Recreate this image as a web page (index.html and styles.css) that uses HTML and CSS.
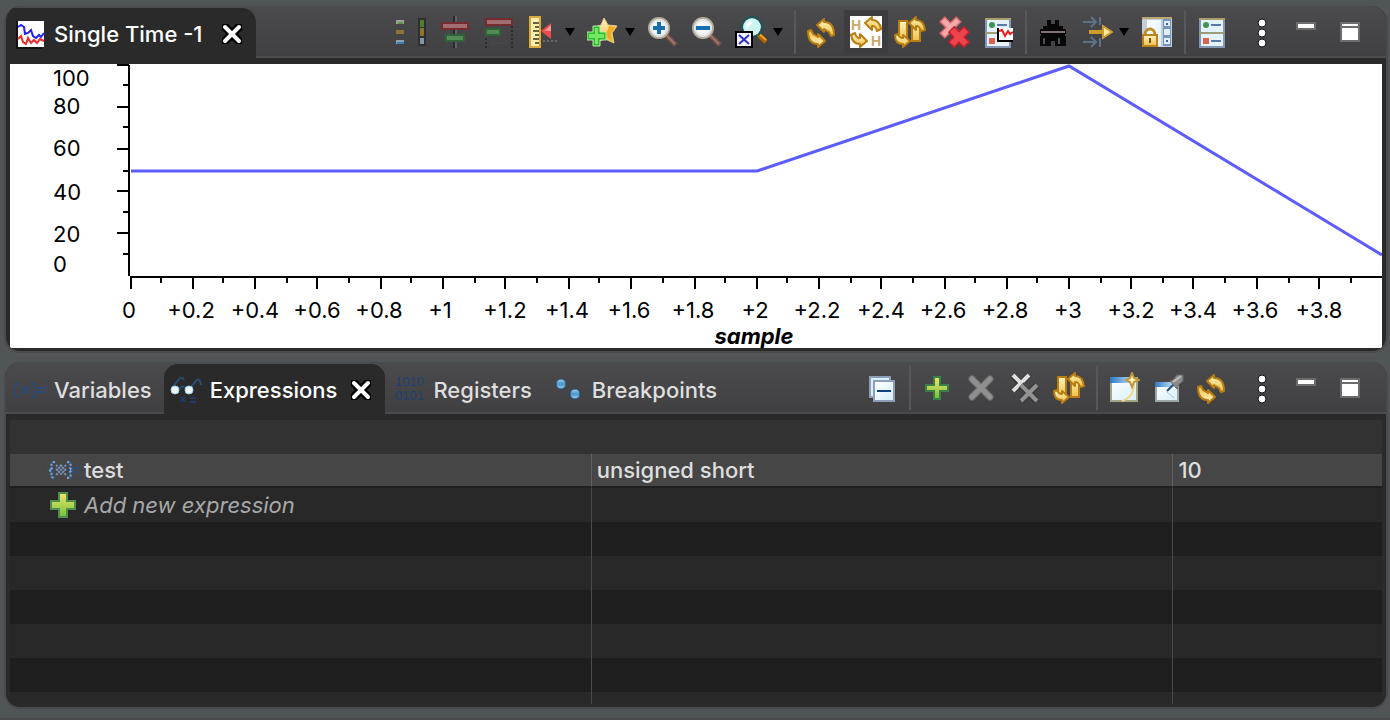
FILE: index.html
```html
<!DOCTYPE html>
<html lang="en">
<head>
	<meta charset="UTF-8">
	<meta name="viewport" content="width=device-width, initial-scale=1.0">
	<title>Debug - Expressions</title>
	<link rel="stylesheet" href="styles.css">
</head>
<body>
	<!-- shared icon shapes -->
	<svg class="defs" aria-hidden="true">
		<defs>
			<linearGradient id="gold" x1="0" y1="0" x2="0" y2="1">
				<stop offset="0" stop-color="#fff3c0"/><stop offset="1" stop-color="#eec04a"/>
			</linearGradient>
			<linearGradient id="lime" x1="0" y1="0" x2="0" y2="1">
				<stop offset="0" stop-color="#f2e56a"/><stop offset="1" stop-color="#6fc13a"/>
			</linearGradient>
			<linearGradient id="sky" x1="0" y1="0" x2="1" y2="1">
				<stop offset="0" stop-color="#ffffff"/><stop offset="1" stop-color="#d6effc"/>
			</linearGradient>
			<linearGradient id="blue" x1="0" y1="0" x2="1" y2="0">
				<stop offset="0" stop-color="#2f78c4"/><stop offset="1" stop-color="#c4e4f8"/>
			</linearGradient>
			<linearGradient id="ball" x1="0" y1="0" x2="0" y2="1">
				<stop offset="0" stop-color="#a8d6ea"/><stop offset=".5" stop-color="#4a94c4"/><stop offset="1" stop-color="#9ad2ee"/>
			</linearGradient>
			<path id="arrow" d="M11 9L18 3V6C24 6 28 10 28 19L25 20L23 16L18 13V16Z" fill="url(#gold)" stroke="#b97d12" stroke-width="2" stroke-linejoin="round"/>
			<g id="refresh">
				<use href="#arrow"/>
				<use href="#arrow" transform="rotate(180 15 17)"/>
			</g>
			<g id="sync">
				<path d="M5 5H13V24H5ZM18 10H26V25H18Z" fill="url(#gold)" stroke="#b97d12" stroke-width="2"/>
				<path d="M15 7L22 1V4C27 4 30 7 31 14L27 15C26 11 25 10 22 10V14Z" fill="url(#gold)" stroke="#b97d12" stroke-width="2" stroke-linejoin="round"/>
				<path d="M16 25L9 31V28C4 28 1 25 1 19L4 18C5 21 6 22 9 22V19Z" fill="url(#gold)" stroke="#b97d12" stroke-width="2" stroke-linejoin="round"/>
			</g>
			<g id="lens">
				<path d="M19 19L29 29" stroke="#75504a" stroke-width="5"/>
				<path d="M20 20L28 28" stroke="#a0776e" stroke-width="2"/>
				<circle cx="12" cy="12" r="10" fill="#f6f6f8" stroke="#b5ad94" stroke-width="2"/>
				<circle cx="12" cy="12" r="8" fill="none" stroke="#dde3ee" stroke-width="2"/>
			</g>
			<g id="close">
				<path d="M6 6H12L16 10L20 6H26V12L22 16L26 20V26H20L16 22L12 26H6V20L10 16L6 12Z" fill="#000"/>
				<path d="M9 9L23 23M23 9L9 23" stroke="#fff" stroke-width="4" stroke-linecap="round"/>
				<path d="M13 13H19V19H13Z" fill="#fff"/>
			</g>
			<g id="cards">
				<path d="M4 3H28V31H4Z" fill="#e3f2fb" stroke="#8496b4" stroke-width="2"/>
				<path d="M3 3H29" stroke="#a89f6a" stroke-width="2"/>
				<path d="M3 17H29" stroke="#9b9c78" stroke-width="2"/>
				<circle cx="10" cy="9" r="3" fill="#3f9450"/>
				<path d="M15 9H25M15 25H25" stroke="#587aa6" stroke-width="2"/>
				<path d="M7 22H13V28H7Z" fill="#e0604e"/>
			</g>
			<g id="dots" fill="#fff" stroke="#111" stroke-width="1">
				<circle cx="16" cy="7" r="4"/><circle cx="16" cy="17" r="4"/><circle cx="16" cy="27" r="4"/>
			</g>
			<g id="minimize">
				<path d="M6 6H26V14H6Z" fill="#6c6c6d"/><path d="M8 8H24V12H8Z" fill="#fff"/>
			</g>
			<g id="maximize">
				<path d="M6 6H26V26H6Z" fill="#6c6c6d"/><path d="M8 8H24V10H8ZM8 12H24V24H8Z" fill="#fff"/>
			</g>
			<path id="plus" d="M13 5H19V13H27V19H19V27H13V19H5V13H13Z" fill="url(#lime)" stroke="#3c7d4c" stroke-width="2"/>
		</defs>
	</svg>

	<section class="panel">
		<header class="panel-head">
			<nav class="tabs">
				<div class="tab active tab-first">
					<svg class="icon" viewBox="0 0 32 32"><path d="M2 3H28V31H2Z" fill="#111"/><path d="M4 3H30V29H4Z" fill="#fff"/><path d="M4 9L7 7L10 9L11 16L14 15L17 12L19 18L22 20L25 17L27 19L30 15" fill="none" stroke="#2222f0" stroke-width="2"/><path d="M4 21L7 18L9 24L12 26L14 20L17 25L20 22L23 25L26 21L30 23" fill="none" stroke="#f02828" stroke-width="2"/></svg>
					<span class="tab-text">Single Time -1</span>
					<button class="close" aria-label="Close Single Time -1"><svg class="icon" viewBox="0 0 32 32"><use href="#close"/></svg></button>
				</div>
			</nav>
			<div class="toolbar">
				<button class="tool" aria-label="Legend" disabled><svg class="icon" viewBox="0 0 32 32"><path d="M1 4H9V8H1Z" fill="#9da39a"/><path d="M3 6H8V8H3Z" fill="#5b9a3c"/><path d="M1 14H9V18H1Z" fill="#8b7438"/><path d="M1 24H9V28H1Z" fill="#8ea0ac"/><path d="M2 26H9V28H2Z" fill="#3e7eae"/><path d="M23 2H31V30H23Z" fill="#2d2f33"/><path d="M25 4H29V11H25Z" fill="#527e2c"/><path d="M25 12H29V20H25Z" fill="#8b742c"/><path d="M25 22H29V28H25Z" fill="#8295a2"/></svg></button>
				<button class="tool" aria-label="Align center" disabled><svg class="icon" viewBox="0 0 32 32"><path d="M14 0H16V32H14Z" fill="#2b2c2e"/><path d="M16 0H18V32H16Z" fill="#5c6067"/><path d="M3 7H29V13H3Z" fill="#a06d70" stroke="#742c30" stroke-width="2"/><path d="M7 19H25V25H7Z" fill="#538b57" stroke="#2f6236" stroke-width="2"/></svg></button>
				<button class="tool" aria-label="Align left" disabled><svg class="icon" viewBox="0 0 32 32"><path d="M3 3H29V9H3Z" fill="#a06d70" stroke="#742c30" stroke-width="2"/><path d="M3 13H17V19H3Z" fill="#538b57" stroke="#2f6236" stroke-width="2"/><path d="M3 22V32M29 10V32" stroke="#2b2c2e" stroke-width="2" stroke-dasharray="2 2"/><path d="M9 24V30M23 24V30M10 27H22" stroke="#494d55" stroke-width="1"/></svg></button>
				<button class="tool drop" aria-label="Measurement"><svg class="icon" viewBox="0 0 32 32"><path d="M3 1H13V31H3Z" fill="#fff0ac" stroke="#dda83c" stroke-width="2"/><path d="M6 7H12M8 11H12M6 15H12M8 19H12M6 23H12M8 27H12" stroke="#6b6048" stroke-width="2"/><path d="M14 15L24 7V23Z" fill="#f04a4c"/><path d="M17 15L24 9V15Z" fill="#ff9292"/><path d="M16 25H30" stroke="#68696c" stroke-width="2" stroke-dasharray="2 2"/></svg><i class="caret"></i></button>
				<button class="tool drop" aria-label="Add marker"><svg class="icon" viewBox="0 0 32 32"><path d="M17 2L21 9L30 10L25 17L27 27L18 23L10 26L11 18L8 11L14 9Z" fill="url(#gold)" stroke="#e5c680" stroke-width="1"/><path d="M22 10L29 11L24 17L25 25L18 20Z" fill="#f2ab20"/><path d="M6 10H13V16H19V24H13V30H6V24H0V16H6Z" fill="#2fbf2a" stroke="#b8eaae" stroke-width="1"/><path d="M8 12H11V18H17V22H11V28H8V22H2V18H8Z" fill="#75e765"/></svg><i class="caret"></i></button>
				<button class="tool" aria-label="Zoom in"><svg class="icon" viewBox="0 0 32 32"><use href="#lens"/><path d="M12 6V18M6 12H18" stroke="#176eae" stroke-width="4"/></svg></button>
				<button class="tool" aria-label="Zoom out"><svg class="icon" viewBox="0 0 32 32"><use href="#lens"/><path d="M5 12H19" stroke="#176eae" stroke-width="4"/></svg></button>
				<button class="tool drop" aria-label="Reset zoom"><svg class="icon" viewBox="0 0 32 32"><path d="M23 18L31 26" stroke="#ac6506" stroke-width="5"/><path d="M23 17L31 24" stroke="#f3a51d" stroke-width="2"/><circle cx="17" cy="11" r="9" fill="#caf5f2"/><circle cx="17" cy="11" r="10" fill="none" stroke="#14565a" stroke-width="2" stroke-dasharray="4 1"/><path d="M11 8Q15 3 18 6L12 13Z" fill="#fff"/><path d="M1 16H17V31H1Z" fill="#f3f3ff" stroke="#000" stroke-width="2"/><path d="M4 19L14 28M14 19L4 28" stroke="#3030c8" stroke-width="2"/></svg><i class="caret"></i></button>
				<span class="sep"></span>
				<button class="tool" aria-label="Refresh"><svg class="icon" viewBox="0 0 32 32"><use href="#refresh"/></svg></button>
				<button class="tool checked" aria-label="Refresh on halt" aria-pressed="true"><svg class="icon" viewBox="0 0 32 32"><path d="M0 0H32V32H0Z" fill="#fff"/><text class="letter" x="1" y="14">H</text><text class="letter" x="21" y="30">H</text><path d="M15 7L22 1V4C27 4 30 7 31 13L27 15C26 11 25 10 22 10V14Z" fill="url(#gold)" stroke="#b97d12" stroke-width="2" stroke-linejoin="round"/><path d="M17 25L10 31V28C5 28 2 25 1 19L5 17C6 21 7 22 10 22V18Z" fill="url(#gold)" stroke="#b97d12" stroke-width="2" stroke-linejoin="round"/></svg></button>
				<button class="tool" aria-label="Continuous refresh"><svg class="icon" viewBox="0 0 32 32"><use href="#sync"/></svg></button>
				<button class="tool" aria-label="Remove all"><svg class="icon" viewBox="0 0 32 32"><path d="M4 3L21 20M21 3L4 20" stroke="#e0686e" stroke-width="8"/><path d="M5 4L21 20M20 4L5 19" stroke="#f3a9ab" stroke-width="5"/><path d="M13 13L29 29M29 13L13 29" stroke="#c81d28" stroke-width="9"/><path d="M14 14L28 28M28 14L14 28" stroke="#ec444c" stroke-width="6"/></svg></button>
				<button class="tool" aria-label="Graph properties"><svg class="icon" viewBox="0 0 32 32"><use href="#cards"/><path d="M15 12H31V25H15Z" fill="#fff"/><path d="M16 12V25H31" stroke="#000" stroke-width="2" fill="none"/><path d="M17 15L20 14L23 20L26 15L28 18L31 16" stroke="#f21818" stroke-width="2" fill="none"/></svg></button>
				<span class="sep"></span>
				<button class="tool" aria-label="Find"><svg class="icon" viewBox="0 0 32 32"><path d="M10 4H14V8H18V4H22V10H26V13H29V18H28V20H29V30H18V25H14V30H3V20H4V18H3V13H6V10H10Z" fill="#070707"/><path d="M4 15H28V17H4Z" fill="#817174"/><path d="M7 22V28M22 22V28" stroke="#46525c" stroke-width="2"/></svg></button>
				<button class="tool drop" aria-label="Go to"><svg class="icon" viewBox="0 0 32 32"><path d="M2 6H14M10 1L15 6L10 11M19 1V9M2 26H14M10 21L15 26L10 31M19 22V31" stroke="#5d7286" stroke-width="2" fill="none"/><path d="M9 15H22V10L31 16L22 22V17H9Z" fill="#ffe9a0" stroke="#cf9a2a" stroke-width="2"/></svg><i class="caret"></i></button>
				<button class="tool" aria-label="Lock view"><svg class="icon" viewBox="0 0 32 32"><path d="M1 1H31V31H1Z" fill="#c4cedb"/><path d="M1 1H31V3H1Z" fill="#b9a875"/><path d="M6 4H20V30H6Z" fill="url(#sky)"/><path d="M22 3H30V30H22Z" fill="#7695bd"/><path d="M23 5H29V10H23ZM23 13H29V19H23ZM23 22H29V28H23Z" fill="#e1eefa"/><path d="M25 7H27V9H25ZM25 24H27V26H25Z" fill="#3767a4"/><path d="M4 19C4 11 14 11 14 19" fill="none" stroke="#be9028" stroke-width="3"/><path d="M2 19H16V30H2Z" fill="url(#gold)" stroke="#bc821a" stroke-width="2"/><path d="M8 22H10V27H8Z" fill="#77501a"/></svg></button>
				<span class="sep"></span>
				<button class="tool" aria-label="Display properties"><svg class="icon" viewBox="0 0 32 32"><use href="#cards"/></svg></button>
				<div class="view-buttons">
					<button class="tool" aria-label="View menu"><svg class="icon" viewBox="0 0 32 32"><use href="#dots"/></svg></button>
					<button class="tool" aria-label="Minimize"><svg class="icon" viewBox="0 0 32 32"><use href="#minimize"/></svg></button>
					<button class="tool" aria-label="Maximize"><svg class="icon" viewBox="0 0 32 32"><use href="#maximize"/></svg></button>
				</div>
			</div>
		</header>
		<svg class="chart" viewBox="0 0 1372 284" role="img" aria-label="Single time graph">
			<!-- axes -->
			<path class="axis" d="M119 1V212M120 213H1372"/>
			<path class="axis" d="M107 1H119M107 43H119M107 85H119M107 127H119M107 169H119M113 21H119M113 63H119M113 107H119M113 148H119M113 190H119"/>
			<path class="axis" d="M121 213V225M183 213V225M245 213V225M307 213V225M371 213V225M433 213V225M495 213V225M559 213V225M621 213V225M685 213V225M747 213V225M809 213V225M871 213V225M935 213V225M997 213V225M1059 213V225M1121 213V225M1183 213V225M1247 213V225M1309 213V225"/>
			<path class="axis" d="M151 213V219M213 213V219M277 213V219M339 213V219M401 213V219M465 213V219M527 213V219M589 213V219M653 213V219M715 213V219M777 213V219M841 213V219M903 213V219M965 213V219M1027 213V219M1091 213V219M1153 213V219M1215 213V219M1279 213V219M1341 213V219"/>
			<!-- y labels -->
			<g>
				<text x="43" y="22">100</text>
				<text x="43" y="50">80</text>
				<text x="43" y="92">60</text>
				<text x="43" y="136">40</text>
				<text x="43" y="178">20</text>
				<text x="43" y="208">0</text>
			</g>
			<!-- x labels -->
			<g class="x-labels">
				<text x="119" y="254">0</text>
				<text x="181" y="254">+0.2</text>
				<text x="245" y="254">+0.4</text>
				<text x="307" y="254">+0.6</text>
				<text x="369" y="254">+0.8</text>
				<text x="430" y="254">+1</text>
				<text x="495" y="254">+1.2</text>
				<text x="557" y="254">+1.4</text>
				<text x="619" y="254">+1.6</text>
				<text x="683" y="254">+1.8</text>
				<text x="745" y="254">+2</text>
				<text x="807" y="254">+2.2</text>
				<text x="871" y="254">+2.4</text>
				<text x="933" y="254">+2.6</text>
				<text x="995" y="254">+2.8</text>
				<text x="1058" y="254">+3</text>
				<text x="1121" y="254">+3.2</text>
				<text x="1183" y="254">+3.4</text>
				<text x="1245" y="254">+3.6</text>
				<text x="1309" y="254">+3.8</text>
				<text class="x-title" x="744" y="280">sample</text>
			</g>
			<polyline class="line" points="121,107 747,107 1059,2 1372,191"/>
		</svg>
	</section>

	<section class="panel panel-fill">
		<header class="panel-head">
			<nav class="tabs">
				<button class="tab">
					<svg class="icon" viewBox="0 0 32 32"><path d="M4 8C-1 12 -1 20 4 24M18 8C23 12 23 20 18 24M7 12L15 20M15 12L7 20M24 14H32M24 18H32" fill="none" stroke="#2b4a78" stroke-width="2"/></svg>
					<span class="tab-text">Variables</span>
				</button>
				<div class="tab active tab-mid">
					<svg class="icon" viewBox="0 0 32 32"><path d="M2 14L10 4Q13 3 14 6M20 14L27 6Q30 4 31 11M9 15Q13 10 16 15" fill="none" stroke="#2a4c72" stroke-width="2"/><circle cx="5" cy="16" r="4" fill="#effaff" stroke="#9dd1ee"/><circle cx="19" cy="16" r="4" fill="#effaff" stroke="#9dd1ee"/><path d="M11 23L15 28M15 23L11 28M20 24H26M20 28H26" stroke="#203c6c" stroke-width="2"/></svg>
					<span class="tab-text">Expressions</span>
					<button class="close" aria-label="Close Expressions"><svg class="icon" viewBox="0 0 32 32"><use href="#close"/></svg></button>
				</div>
				<button class="tab">
					<svg class="icon" viewBox="0 0 32 32"><text class="bits" x="2" y="12">1010</text><text class="bits" x="2" y="26">0101</text></svg>
					<span class="tab-text">Registers</span>
				</button>
				<button class="tab">
					<svg class="icon" viewBox="0 0 32 32"><circle cx="9" cy="10" r="5" fill="url(#ball)" stroke="#1f5384" stroke-width="1"/><circle cx="23" cy="20" r="5" fill="url(#ball)" stroke="#1f5384" stroke-width="1"/></svg>
					<span class="tab-text">Breakpoints</span>
				</button>
			</nav>
			<div class="toolbar">
				<button class="tool" aria-label="Collapse all"><svg class="icon" viewBox="0 0 32 32"><path d="M4 5H24V25H4Z" fill="#d9effb" stroke="#8f9fbb" stroke-width="2"/><path d="M8 9H28V29H8Z" fill="url(#sky)" stroke="#8f9fbb" stroke-width="2"/><path d="M11 19H25" stroke="#0c4283" stroke-width="2"/></svg></button>
				<span class="sep"></span>
				<button class="tool" aria-label="Add expression"><svg class="icon" viewBox="0 0 32 32"><use href="#plus"/></svg></button>
				<button class="tool" aria-label="Remove expression" disabled><svg class="icon" viewBox="0 0 32 32"><path d="M7 7L25 25M25 7L7 25" stroke="#707070" stroke-width="7" stroke-linecap="round"/><path d="M7 7L25 25M25 7L7 25" stroke="#8f8f8f" stroke-width="5" stroke-linecap="round"/></svg></button>
				<button class="tool" aria-label="Remove all expressions"><svg class="icon" viewBox="0 0 32 32"><path d="M4 4L18 18M20 3L4 19" stroke="#333" stroke-width="6"/><path d="M4 3L18 17M20 3L4 19" stroke="#dedede" stroke-width="4"/><path d="M12 13L28 29M28 13L12 29" stroke="#383838" stroke-width="7"/><path d="M12 13L28 29M28 13L12 29" stroke="#929292" stroke-width="4"/></svg></button>
				<button class="tool" aria-label="Continuous refresh"><svg class="icon" viewBox="0 0 32 32"><use href="#sync"/></svg></button>
				<span class="sep"></span>
				<button class="tool" aria-label="New view"><svg class="icon" viewBox="0 0 32 32"><path d="M3 6H29V29H3Z" fill="url(#sky)" stroke="#a4a689" stroke-width="2"/><path d="M2 5H26V11H2Z" fill="url(#blue)"/><path d="M26 11Q26 25 14 29" fill="none" stroke="#f1d685" stroke-width="2"/><path d="M24 1L26 6L31 8L26 10L24 15L22 10L18 8L22 6Z" fill="#fff2b0" stroke="#bd983e" stroke-width="2"/></svg></button>
				<button class="tool" aria-label="Pin view"><svg class="icon" viewBox="0 0 32 32"><path d="M4 11H26V29H4Z" fill="url(#sky)" stroke="#9ca7a6" stroke-width="2"/><path d="M3 10H22V15H3Z" fill="url(#blue)"/><path d="M15 20L22 26" stroke="#a3c6e4"/><path d="M15 19L23 11" stroke="#284b72" stroke-width="2"/><path d="M18 9L21 8L25 3L31 3V9L26 13L25 17Z" fill="#8b8b8b" stroke="#696969" stroke-width="1"/><path d="M21 10L29 4" stroke="#bbb" stroke-width="2"/></svg></button>
				<button class="tool" aria-label="Refresh"><svg class="icon" viewBox="0 0 32 32"><use href="#refresh"/></svg></button>
				<div class="view-buttons">
					<button class="tool" aria-label="View menu"><svg class="icon" viewBox="0 0 32 32"><use href="#dots"/></svg></button>
					<button class="tool" aria-label="Minimize"><svg class="icon" viewBox="0 0 32 32"><use href="#minimize"/></svg></button>
					<button class="tool" aria-label="Maximize"><svg class="icon" viewBox="0 0 32 32"><use href="#maximize"/></svg></button>
				</div>
			</div>
		</header>
		<table class="grid">
			<colgroup><col class="col-name"><col class="col-type"><col></colgroup>
			<thead>
				<tr><th></th><th></th><th></th></tr>
			</thead>
			<tbody>
				<tr class="selected">
					<td><div class="cell"><svg class="icon" viewBox="0 0 32 32"><path d="M8 8Q3 8 5 14L2 16L5 18Q3 24 8 24M20 8Q25 8 23 14L25 16L23 18Q25 24 20 24" fill="none" stroke="#34577f" stroke-width="3"/><path d="M8 8Q3 8 5 14L2 16L5 18Q3 24 8 24M20 8Q25 8 23 14L25 16L23 18Q25 24 20 24" fill="none" stroke="#8ba6c8" stroke-width="2" stroke-dasharray="2 2"/><path d="M9 11L19 21M19 11L9 21M13 11L19 17M9 15L15 21M15 11L9 17M19 15L13 21" stroke="#7794bb" stroke-width="2" stroke-dasharray="2 1"/><path d="M26 14H32M26 18H32" stroke="#2e4e78" stroke-width="2"/></svg>test</div></td>
					<td>unsigned short</td>
					<td>10</td>
				</tr>
				<tr>
					<td><div class="cell add"><svg class="icon" viewBox="0 0 32 32"><path d="M12 4H20V12H28V20H20V28H12V20H4V12H12Z" fill="url(#lime)" stroke="#4f8c50" stroke-width="2"/></svg>Add new expression</div></td>
					<td></td>
					<td></td>
				</tr>
				<tr><td></td><td></td><td></td></tr>
				<tr><td></td><td></td><td></td></tr>
				<tr><td></td><td></td><td></td></tr>
				<tr><td></td><td></td><td></td></tr>
				<tr><td></td><td></td><td></td></tr>
				<tr class="cut"><td></td><td></td><td></td></tr>
			</tbody>
		</table>
	</section>
</body>
</html>
```
FILE: styles.css
```css
* {
	box-sizing: border-box;
}
body {
	margin: 0; padding: 6px 2px 9px 4px;
	min-height: 100vh;
	display: flex; flex-direction: column; gap: 9px;
	background-color: #505558;
	border-bottom: 2px solid #4a4a4d;
	font-family: Inter, "Liberation Sans", sans-serif;
	font-size: 22px; line-height: 32px;
	color: #dedede;
}
button {
	padding: 0; border: 0; background: none;
	font: inherit; color: inherit;
}
.defs {
	position: absolute; width: 0; height: 0;
}
.icon {
	display: block; flex: none;
	width: 32px; height: 32px;
}

/* panel */
.panel {
	padding-bottom: 3px;
	background-color: #2a2a2a;
	border: 2px solid #4a4a4d; border-top: 0;
	border-radius: 16px;
	overflow: hidden;
}
.panel-fill {
	flex: 1;
}
.panel-head {
	display: flex; justify-content: space-between;
	height: 52px; margin-bottom: 6px;
	background: linear-gradient(#4b4b4e, #404042 50px, #4b4a4c 50px);
}

/* tabs */
.tabs {
	display: flex; padding-top: 2px;
}
.tab {
	display: flex; align-items: center; gap: 8px;
	height: 50px; padding: 2px 12px 0 8px;
	white-space: nowrap;
}
.tab-text {
	font-weight: 500;
}
.tab.active {
	padding-right: 8px; color: #fff;
	background-color: #2a2a2a;
	border-radius: 0 14px 0 0;
}
.tab.tab-first {
	min-width: 250px;
}
.tab.tab-mid {
	padding-left: 6px;
	border-radius: 14px 14px 0 0;
}
.close {
	margin-left: auto;
}

/* toolbar */
.toolbar {
	display: flex; align-items: center;
	padding: 4px 14px 4px 0;
}
.tool {
	display: flex; align-items: center; justify-content: center;
	width: 44px; height: 44px;
}
.tool.drop {
	width: 60px; padding-left: 6px; gap: 6px;
	justify-content: flex-start;
}
.tool.checked {
	background-color: #3d3d3f;
}
.caret {
	border: 5px solid transparent; border-top: 8px solid #000;
	border-bottom: 0;
}
.sep {
	width: 2px; height: 44px;
	margin: 0 4px 0 5px;
	background-color: #58585a;
}
.view-buttons {
	display: flex; margin-left: 6px;
}
.letter {
	font-family: "Liberation Sans", sans-serif; font-weight: bold;
	font-size: 14px; fill: #c8aa6c;
}
.bits {
	font-family: "Liberation Sans", sans-serif;
	font-size: 13px; fill: #203f74;
}

/* chart */
.chart {
	display: block;
	width: calc(100% - 8px); margin: 0 4px;
	background-color: #fff;
	font-size: 22px;
}
.axis {
	stroke: #000; stroke-width: 2; fill: none;
}
.line {
	stroke: #5c5cff; stroke-width: 3; fill: none;
}
.x-labels {
	text-anchor: middle;
}
.x-title {
	font-weight: bold; font-style: italic;
}

/* expressions table */
.grid {
	width: calc(100% - 8px); margin: 0 4px;
	border-collapse: separate; border-spacing: 0;
	table-layout: fixed;
}
.col-name, .col-type {
	width: 42.4%;
}
.grid th {
	height: 34px; padding: 0;
	background-color: #323232;
}
.grid td {
	height: 34px; padding: 0 5px;
	border-right: 1px solid #4b4b4b;
}
.grid td:last-child {
	border-right: 0;
}
.grid tbody tr {
	background-color: #282828;
}
.grid tbody tr:nth-child(odd) {
	background-color: #1e1e1e;
}
.grid tbody tr.selected {
	background-color: #464646;
}
.grid .selected td {
	border-bottom: 2px solid #1f1f1f;
	border-right-color: #606060;
	font-weight: 500;
}
.grid tbody .cut td {
	height: 12px;
}
.cell {
	display: flex; align-items: center; gap: 5px;
	padding-left: 32px;
}
.add {
	font-style: italic; color: #a8a8a8;
}
```
